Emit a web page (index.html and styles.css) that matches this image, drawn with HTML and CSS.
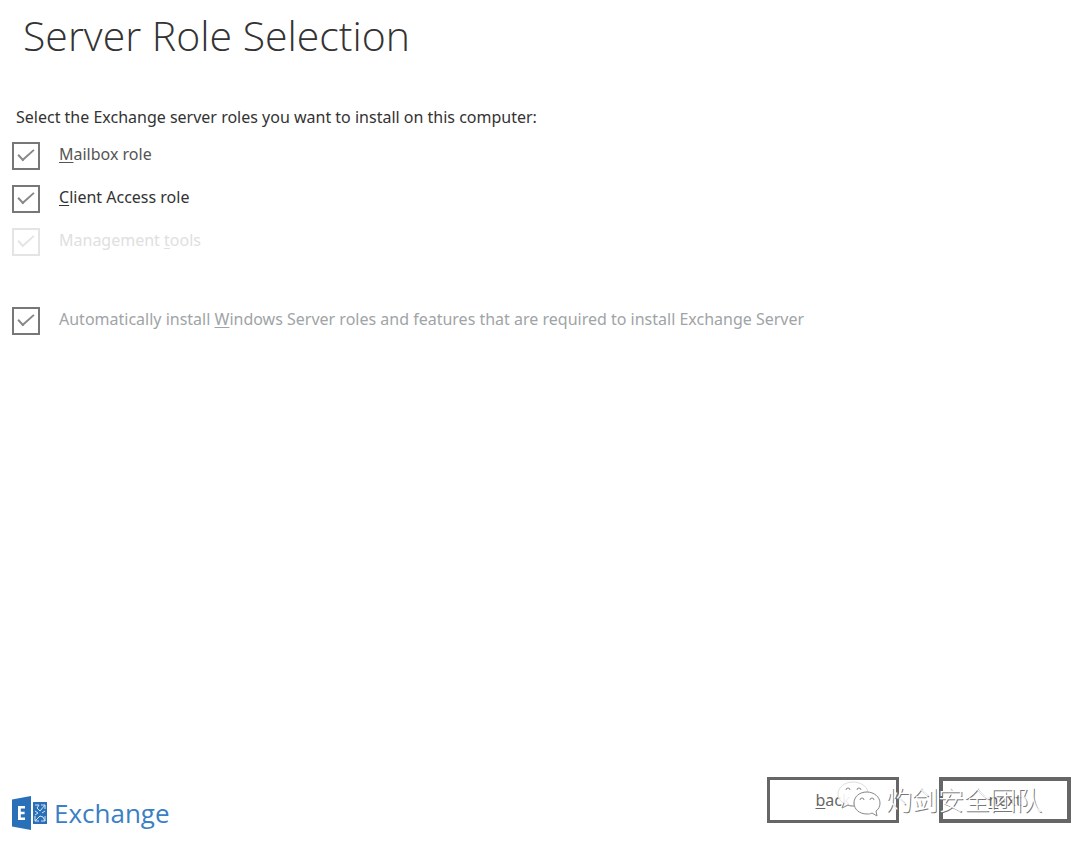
FILE: index.html
```html
<!DOCTYPE html>
<html lang="en">
<head>
  <meta charset="UTF-8">
  <title>Server Role Selection</title>
  <link rel="stylesheet" href="styles.css">
</head>
<body>

  <main>
    <h1>Server Role Selection</h1>

    <form id="roles">
      <p class="intro">Select the Exchange server roles you want to install on this computer:</p>

      <div class="option mailbox">
        <input type="checkbox" id="mailbox" checked>
        <label for="mailbox"><u>M</u>ailbox role</label>
      </div>
      <div class="option">
        <input type="checkbox" id="clientAccess" checked>
        <label for="clientAccess"><u>C</u>lient Access role</label>
      </div>
      <div class="option disabled">
        <input type="checkbox" id="tools" checked disabled>
        <label for="tools">Management <u>t</u>ools</label>
      </div>
      <div class="option features">
        <input type="checkbox" id="features" checked>
        <label for="features">Automatically install <u>W</u>indows Server roles and features that are required to install Exchange Server</label>
      </div>
    </form>
  </main>

  <footer>
    <div class="logo">
      <svg width="36" height="34" viewBox="0 0 36 34" aria-hidden="true">
        <path fill="#2a70b8" d="M0 3.500 19 0v34L0 30.500z"/>
        <path fill="#fff" d="M6 10h7v2.500H8.800v3.200h3.800v2.500H8.800v3.300H13V24H6z"/>
        <path fill="#2a70b8" d="M21 6h14v22H21z"/>
        <path fill="none" stroke="#d5e5f4" d="M23 9h4l-2 3 3 3 5-6M29 9h4v4M23 20v5h4M23 25l5-5 3 1 2 4h-4M33 25v-5M23 15l3 2-3 2M33 15l-3 2"/>
      </svg>
      <span>Exchange</span>
    </div>

    <div class="buttons">
      <button type="button"><u>b</u>ack</button>
      <button type="submit" form="roles" class="next"><u>n</u>ext</button>
      <div class="watermark">
        <svg width="44" height="38" viewBox="0 0 44 38" aria-hidden="true">
          <path fill="#fff" fill-opacity=".9" stroke="#ddd" d="M16 2C8 2 1 7 1 14c0 4 2 7 6 9l-2 5 6-3c2 1 4 1 6 1-1-8 5-14 14-14C30 6 23 2 16 2z"/>
          <path fill="none" stroke="#888" d="M7 23l-2 5 6-3c2 1 4 1 6 1"/>
          <path fill="#fff" fill-opacity=".9" stroke="#888" d="M30 12c-8 0-13 5-13 11s5 11 13 11c2 0 3 0 5-1l5 3-1-5c3-2 4-5 4-8 0-6-6-11-13-11z"/>
          <g fill="none" stroke="#888"><path d="M9 10a2 2 0 0 1 4 0M20 10a2 2 0 0 1 4 0M23 20a2 2 0 0 1 4 0M33 20a2 2 0 0 1 4 0"/></g>
        </svg>
        <span lang="zh">灼剑安全团队</span>
      </div>
    </div>
  </footer>

</body>
</html>
```

FILE: styles.css
```css
* {
  box-sizing: border-box;
}
body {
  display: flex;
  flex-direction: column;
  min-height: 100vh;
  margin: 0;
  background: #fff;
  color: #333;
  font-family: 'Noto Sans', sans-serif;
  font-size: 16px;
  line-height: 24px;
}
main {
  flex: 1;
  padding: 7px 12px;
}
h1 {
  margin: 0;
  padding-left: 11px;
  font-family: 'Open Sans', sans-serif;
  font-size: 41px;
  font-weight: 300;
  line-height: 56px;
}
.intro {
  margin: 42px 0 11px;
  padding-left: 4px;
}
u {
  text-underline-offset: 2px;
}
.option {
  display: flex;
  align-items: flex-start;
  gap: 19px;
  margin-bottom: 13px;
}
.option input {
  appearance: none;
  display: grid;
  place-items: center;
  flex: none;
  width: 28px;
  height: 28px;
  margin: 2px 0 0;
  border: 2px solid #777;
}
.option label {
  padding-top: 2px;
}
.option input:checked::before {
  content: "";
  width: 14px;
  height: 6px;
  border: solid #888;
  border-width: 0 0 2px 2px;
  transform: translateY(-3px) rotate(-42deg);
}
.mailbox {
  color: #555;
}
.disabled {
  color: #e0e0e0;
}
.disabled input,
.disabled input:checked::before {
  border-color: #e4e4e4;
}
.features {
  margin-top: 49px;
  color: #a0a4a6;
}
footer {
  display: flex;
  align-items: center;
  justify-content: space-between;
  padding: 0 9px 19px 12px;
}
.logo {
  display: flex;
  align-items: center;
  gap: 6px;
  margin-top: 26px;
  color: #3a80c4;
  font-family: 'Open Sans', sans-serif;
  font-size: 26px;
}
.buttons {
  position: relative;
  display: flex;
  gap: 40px;
}
button {
  width: 132px;
  height: 46px;
  border: 3px solid #666;
  background: #fff;
  color: #666;
  font: inherit;
}
.next {
  border-width: 4px;
}
.watermark {
  position: absolute;
  top: 3px;
  left: 70px;
  display: flex;
  align-items: center;
  gap: 5px;
  color: #fff;
  font-family: 'Noto Sans CJK SC', sans-serif;
  font-size: 26px;
  font-weight: 300;
  line-height: 36px;
  text-shadow: 1px 1px 0 #777;
  white-space: nowrap;
  pointer-events: none;
}
```
